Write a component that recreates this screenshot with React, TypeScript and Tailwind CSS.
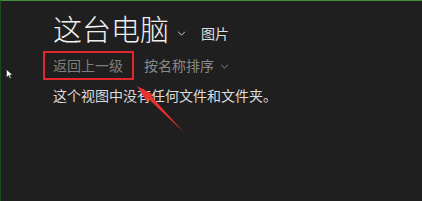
import React from 'react'

const FONT = { fontFamily: '"Noto Sans CJK SC", "Noto Sans", sans-serif' }

function Chevron({ className }: { className?: string }) {
  return (
    <svg viewBox="0 0 10 6" className={className} fill="none" stroke="currentColor" strokeWidth="1.2">
      <path d="M1 1l4 4 4-4" />
    </svg>
  )
}

export default function App() {
  return (
    <div
      className="relative w-[422px] h-[201px] overflow-hidden bg-[#1f1f1f] border-t border-t-[#3f8f3f] border-l border-l-[#1d4d1d]"
      style={FONT}
    >
      <div className="flex flex-col pl-[42px] pt-[9px]">
        <div className="flex items-end ml-[10px]">
          <span className="text-[29px] leading-[36px] font-light text-[#f0f0f0]">这台电脑</span>
          <Chevron className="w-[9px] h-[5px] ml-[8px] mb-[10px] text-[#cfcfcf]" />
          <span className="text-[14px] leading-[20px] text-[#e0e0e0] ml-[15px] mb-[3px]">图片</span>
        </div>

        <div className="flex items-center mt-[5px]">
          <span className="border-2 border-[#e0282a] pl-[8px] pr-[9px] h-[29px] flex items-center text-[14px] text-[#7f7f7f]">
            返回上一级
          </span>
          <span className="ml-[10px] text-[14px] text-[#8a8a8a]">按名称排序</span>
          <Chevron className="w-[9px] h-[5px] ml-[6px] mt-[2px] text-[#8a8a8a]" />
        </div>

        <p className="ml-[10px] mt-[5px] text-[14px] leading-[20px] text-[#dcdcdc]">
          这个视图中没有任何文件和文件夹。
        </p>
      </div>

      {/* annotation arrow */}
      <svg className="absolute left-0 top-0 w-[422px] h-[201px] pointer-events-none" viewBox="0 0 422 201">
        <polygon points="136,85 152,93.5 145.5,100" fill="#e8302c" />
        <polygon points="147.2,97.8 150,95 183,131.5" fill="#e8302c" />
      </svg>

      {/* mouse cursor */}
      <svg className="absolute left-[5px] top-[68px] w-[7px] h-[10px]" viewBox="0 0 7 10">
        <path d="M0.5 0.5v8l2-2 1.5 3 1.2-.6-1.4-2.9h2.7z" fill="#ffffff" stroke="#222" strokeWidth="0.5" />
      </svg>
    </div>
  )
}
